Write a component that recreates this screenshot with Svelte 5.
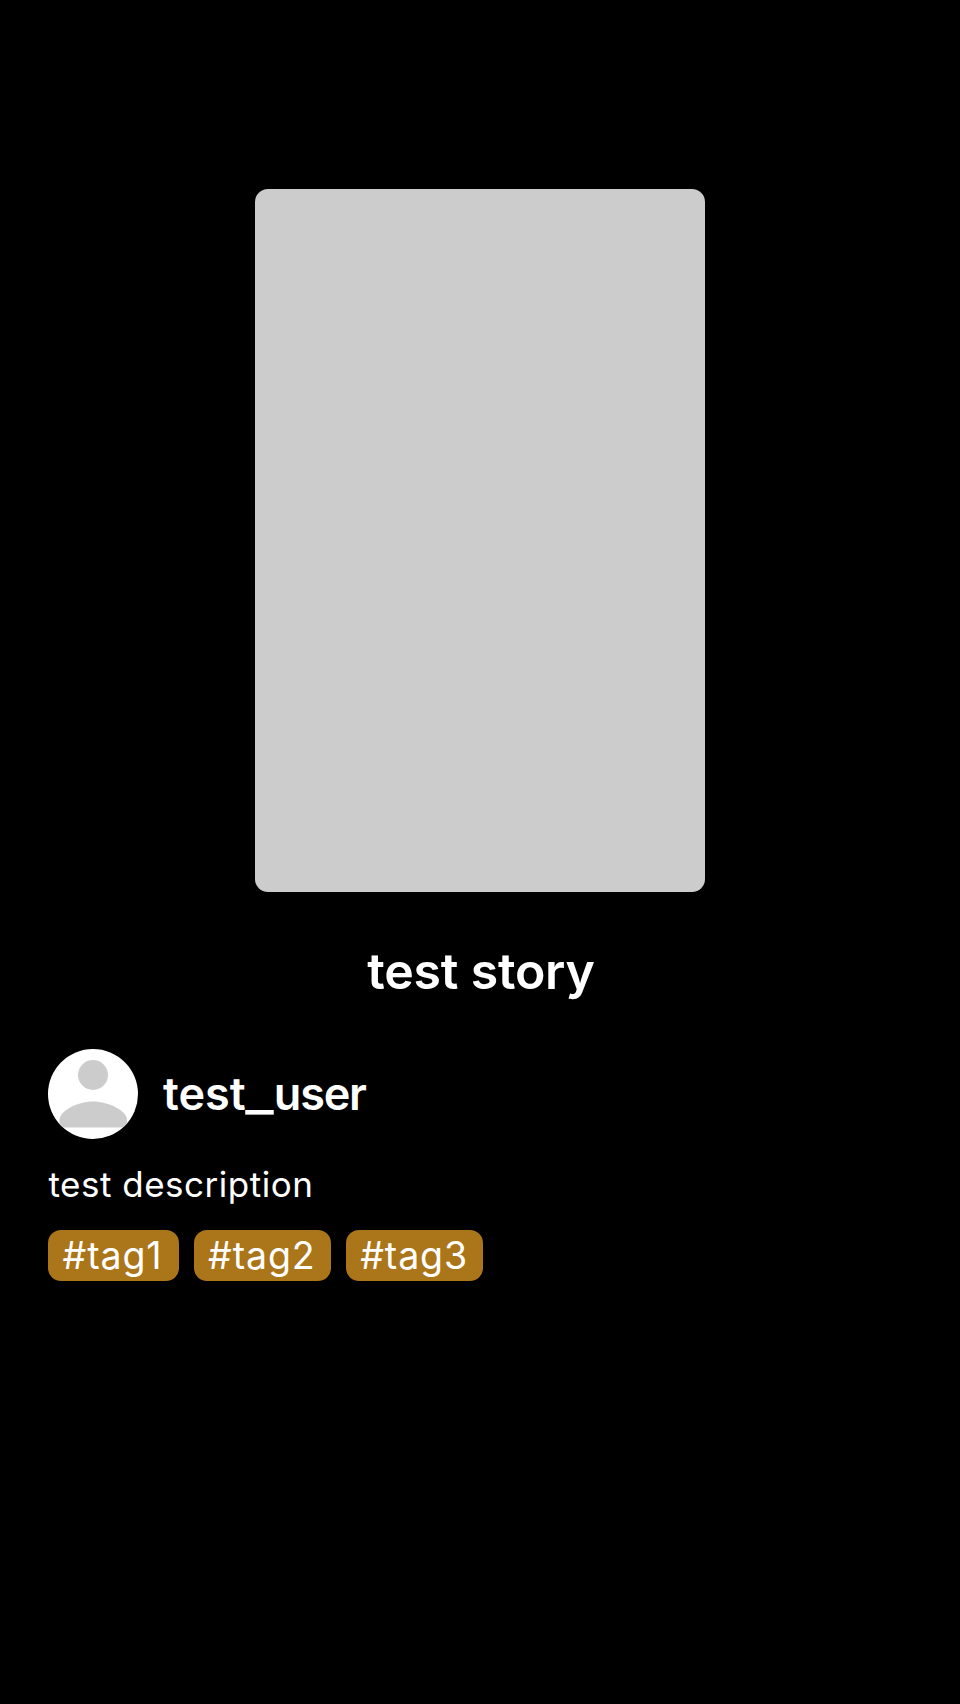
<script>
  const tags = ['#tag1', '#tag2', '#tag3'];
</script>

<main>
  <div class="cover"></div>
  <h1>test story</h1>
  <section>
    <div class="user">
      <svg class="avatar" viewBox="0 0 90 90" aria-hidden="true">
        <rect width="90" height="90" fill="#fff" />
        <circle cx="45" cy="26" r="15" fill="#ccc" />
        <path d="M11.500 78.500V71C11.500 62 29 52.500 45 52.500S79 62 79 71V78.500Z" fill="#ccc" />
      </svg>
      <span class="name">test<span class="underscore">_</span><span class="tail">user</span></span>
    </div>
    <p>test description</p>
    <div class="tags">
      {#each tags as tag}
        <span class="tag">{tag}</span>
      {/each}
    </div>
  </section>
</main>

<style>
  :global(body) { background: #000; }
  main {
    box-sizing: border-box;
    height: 1704px;
    padding: 189px 48px 0;
    background: #000;
    color: #fff;
    font-family: Inter, sans-serif;
    overflow: hidden;
  }
  .cover {
    width: 450px;
    height: 703px;
    margin: 0 auto;
    border-radius: 13px;
    background: #ccc;
  }
  h1 {
    margin: 48px 0 0;
    height: 62px;
    padding-left: 2px;
    font-size: 50px;
    line-height: 62px;
    font-weight: 600;
    letter-spacing: -0.2px;
    text-align: center;
  }
  .user {
    display: flex;
    align-items: center;
    gap: 25px;
    height: 90px;
    margin-top: 47px;
  }
  .avatar { width: 90px; height: 90px; border-radius: 50%; }
  .name { font-size: 45px; line-height: 54px; font-weight: 600; }
  .underscore { display: inline-block; margin: 0 4px 0 3px; transform: scaleX(1.35); }
  .tail { letter-spacing: -1.2px; }
  p {
    margin: 23px 0 0;
    height: 44px;
    padding-left: 0.5px;
    font-size: 35px;
    line-height: 44px;
    letter-spacing: 0.5px;
  }
  .tags { display: flex; gap: 15px; margin-top: 24px; }
  .tag {
    box-sizing: border-box;
    height: 51px;
    padding: 0 15px 0 14.5px;
    border-radius: 13px;
    background: #ab751a;
    font-size: 37.5px;
    line-height: 51px;
    letter-spacing: 0.9px;
  }
  .tag:first-child { padding-right: 16px; }
</style>
